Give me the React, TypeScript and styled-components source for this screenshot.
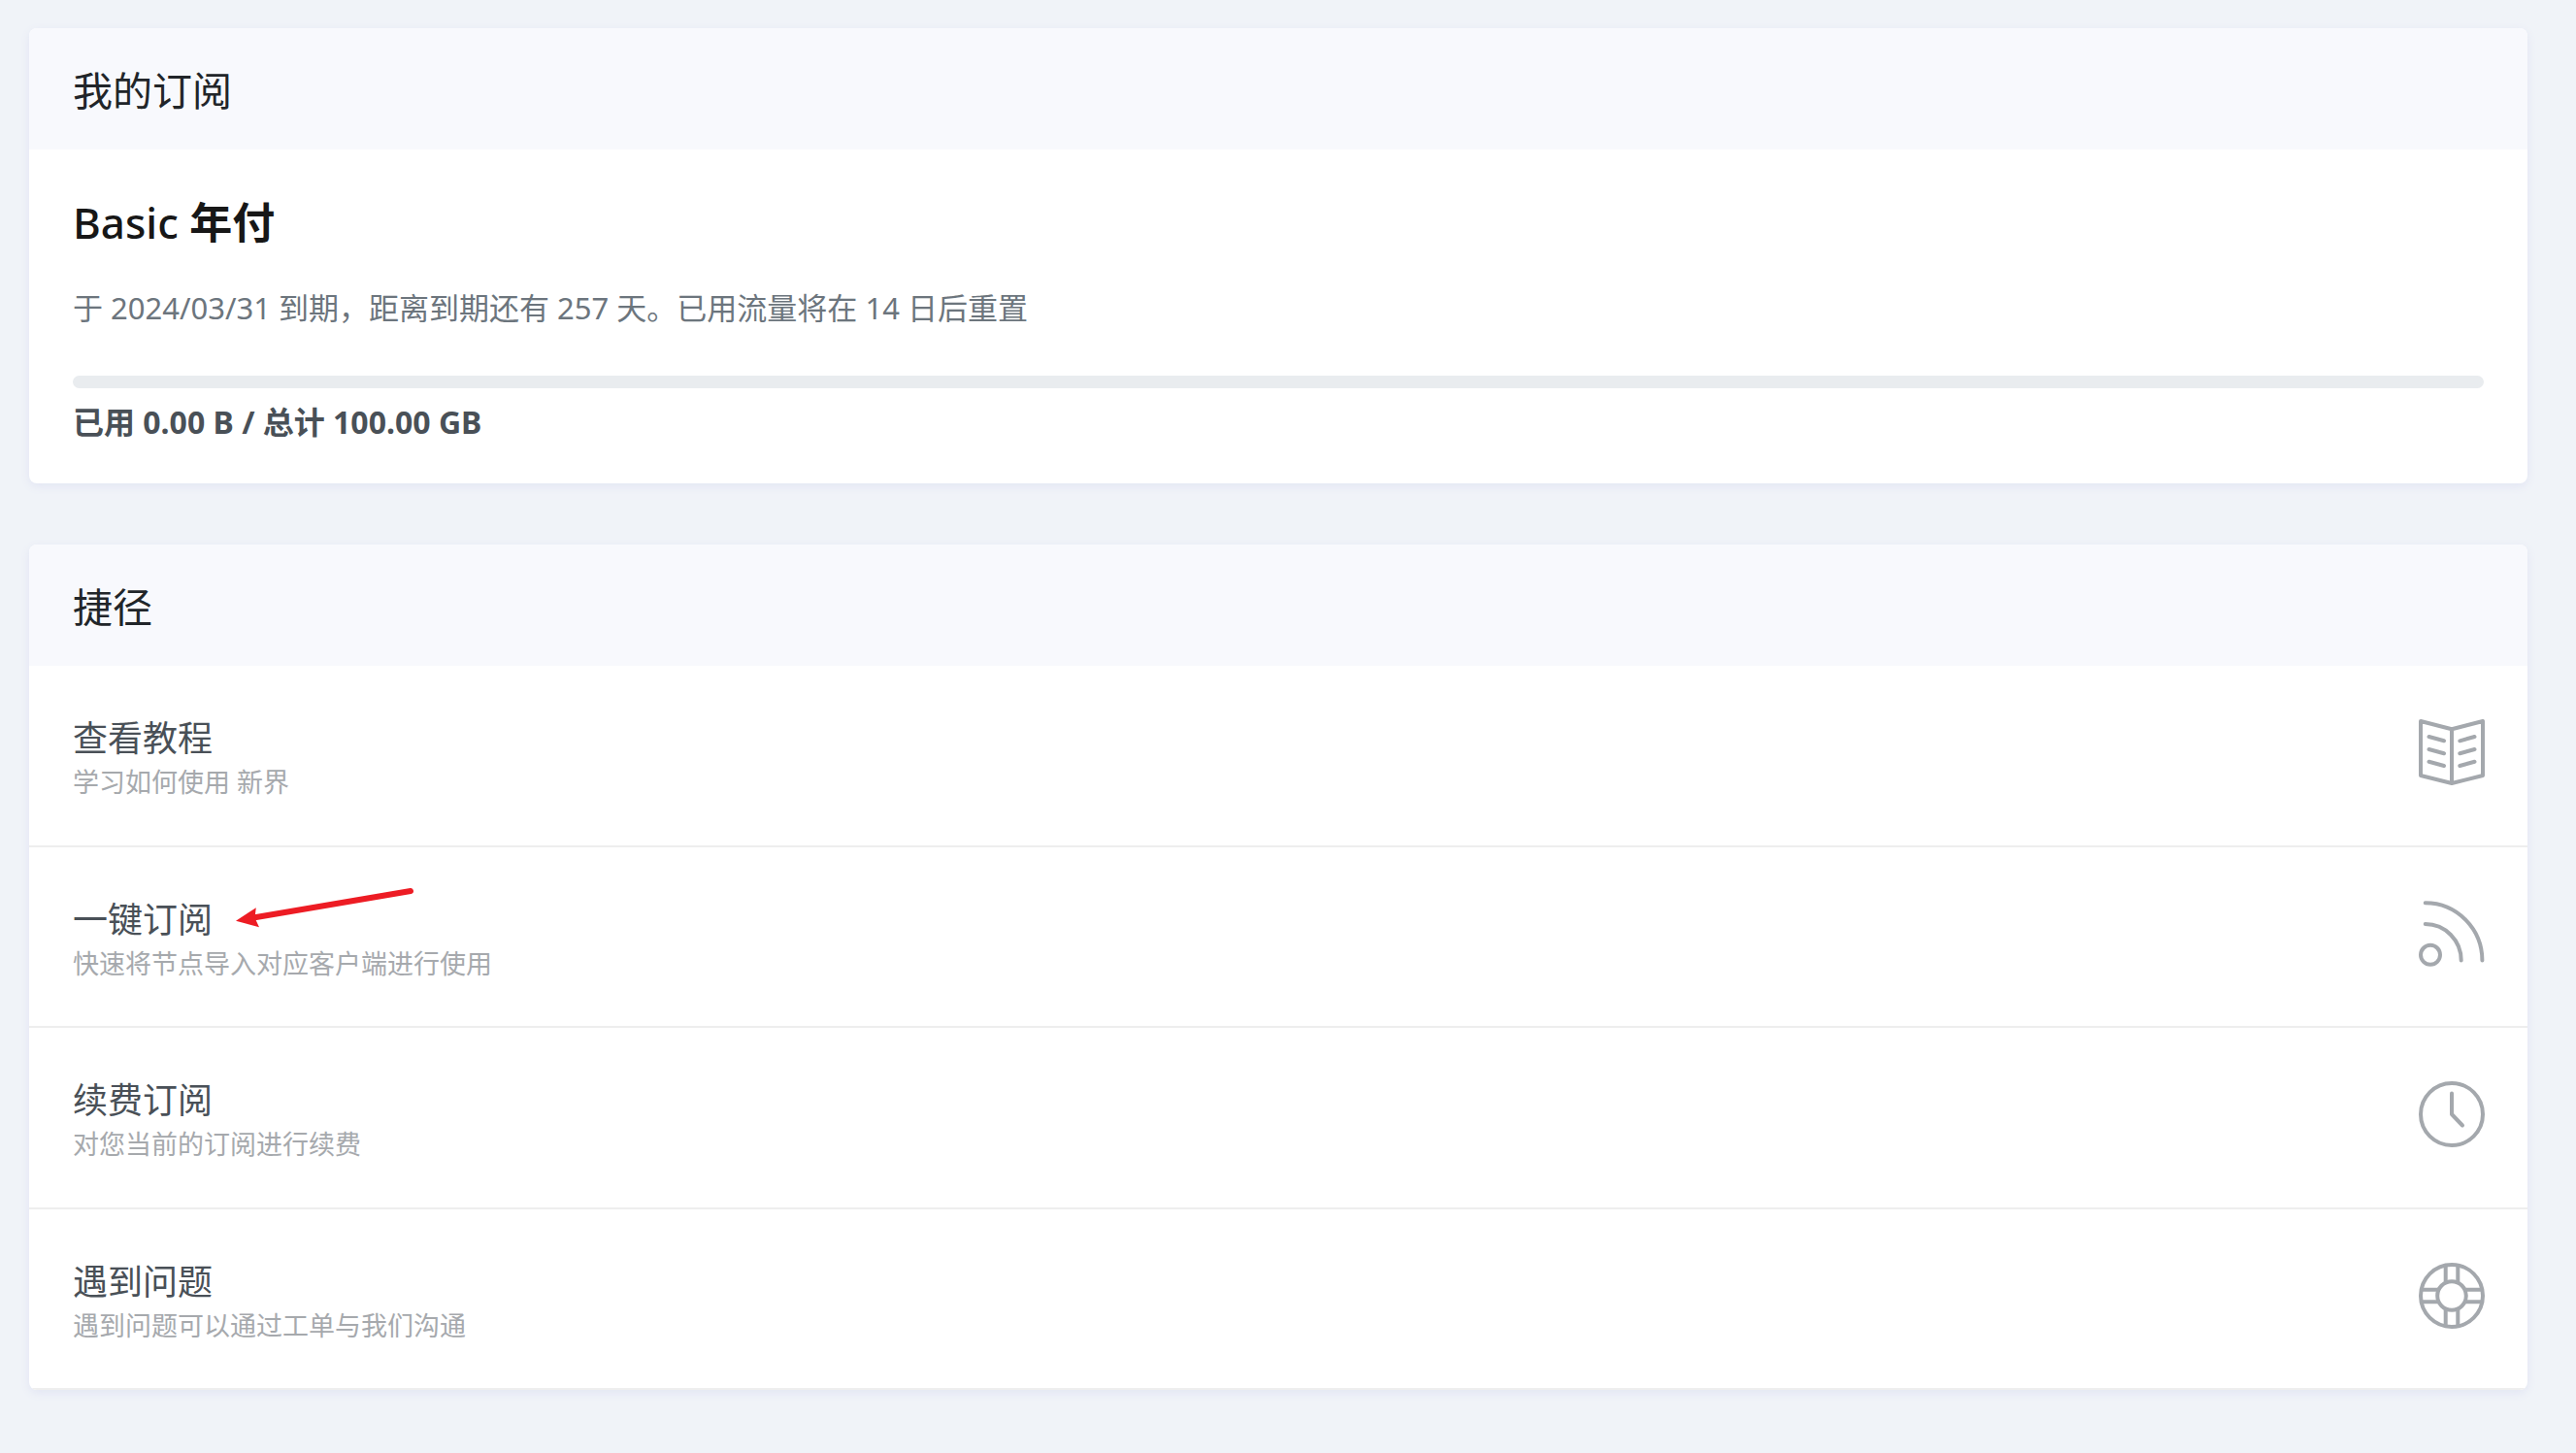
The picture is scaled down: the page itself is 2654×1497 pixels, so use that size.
import React from "react";
import styled, { createGlobalStyle } from "styled-components";

const GlobalStyle = createGlobalStyle`
  *, *::before, *::after { box-sizing: border-box; }
  body {
    margin: 0;
    background: #f0f3f8;
    color: #495057;
    font-family: "Noto Sans", "Noto Sans CJK SC", sans-serif;
    font-size: 31px;
    line-height: 46px;
  }
`;

const Page = styled.main`
  display: flex;
  flex-direction: column;
  gap: 63px;
  min-height: 100vh;
  padding: 29px 50px 64px 30px;
`;

const Card = styled.section`
  overflow: hidden;
  border-radius: 8px;
  background: #fff;
  box-shadow: 0 3px 10px #e2e5f3;
`;

const CardHeader = styled.header`
  padding: 34px 45px 31px;
  background: #f8f9fd;
`;

const CardTitle = styled.h3`
  margin: 0;
  color: #212529;
  font-size: 41px;
  font-weight: 400;
  line-height: 60px;
`;

const CardBody = styled.div`
  padding: 44px 45px 40px;
`;

const PlanName = styled.h2`
  margin: 0 0 34px;
  color: #171717;
  font-size: 44px;
  font-weight: 700;
  line-height: 62px;
`;

const PlanTier = styled.span`
  font-weight: 500;
`;

const PlanInfo = styled.p`
  margin: 0 0 47px;
  color: #6c757d;
`;

const Track = styled.div`
  height: 13px;
  margin-bottom: 12px;
  overflow: hidden;
  border-radius: 7px;
  background: #e9ecef;
`;

const Fill = styled.div`
  height: 100%;
  background: #0665d0;
`;

const Usage = styled.p`
  margin: 0;
  font-size: 32px;
  font-weight: 700;
`;

const ShortcutList = styled.nav`
  display: grid;
  grid-auto-rows: 1fr;
  min-height: 746px;
`;

const Shortcut = styled.a`
  display: flex;
  align-items: flex-start;
  justify-content: space-between;
  padding: 48px 44px 40px 45px;
  border-bottom: 2px solid #eee;
  color: inherit;
  text-decoration: none;
`;

const ShortcutText = styled.div`
  display: flex;
  flex-direction: column;
  align-items: flex-start;
`;

const ShortcutName = styled.div`
  position: relative;
  font-size: 36px;
  line-height: 54px;
`;

const ShortcutHint = styled.div`
  color: #a6a9ad;
  font-size: 27px;
  line-height: 36px;
`;

const Icon = styled.svg`
  flex: none;
  width: 68px;
  height: 68px;
  margin-top: 7px;
  fill: none;
  stroke: #a4a8ad;
  stroke-width: 4;
  stroke-linecap: round;
  stroke-linejoin: round;
`;

const Pointer = styled.svg`
  position: absolute;
  top: -8px;
  left: calc(100% + 24px);
  width: 186px;
  height: 44px;
`;

const BookIcon = () => (
  <Icon viewBox="0 0 68 68" aria-hidden="true">
    <path d="M2 2 34 10.3 66 2V58L34 66 2 58ZM34 10.3V66" />
    <path d="M10.5 18 26 22.3M10.5 31 26 35.2M10.5 43.8 26 48M42.3 22.3 57.5 18M42.3 35.2 57.5 31M42.3 48 57.5 43.8" />
  </Icon>
);

const FeedIcon = () => (
  <Icon viewBox="0 0 68 68" aria-hidden="true">
    <circle cx="12" cy="55.8" r="10" />
    <path d="M6.7 2.2A58.7 59.3 0 0 1 65.4 61.5M6.7 24A37 37.5 0 0 1 43.7 61.5" />
  </Icon>
);

const ClockIcon = () => (
  <Icon viewBox="0 0 68 68" aria-hidden="true">
    <circle cx="34" cy="34" r="32" />
    <path d="M34 12.5V34L45 45.5" />
  </Icon>
);

const SupportIcon = () => (
  <Icon viewBox="0 0 68 68" aria-hidden="true">
    <circle cx="34" cy="34" r="32" />
    <circle cx="34" cy="34" r="14.8" />
    <path d="M27.7 3V20M40.3 3V20M27.7 48V65M40.3 48V65M3 27.7H20M3 40.3H20M48 27.7H65M48 40.3H65" />
  </Icon>
);

const RedArrow = () => (
  <Pointer viewBox="0 0 186 44" aria-hidden="true">
    <path d="M180 5 18 32.5" fill="none" stroke="#ed1c24" strokeWidth="6" strokeLinecap="round" />
    <path d="M0 35.7 20.8 22.3 19.5 32.5 24 42.3Z" fill="#ed1c24" />
  </Pointer>
);

const shortcuts = [
  { name: "查看教程", hint: "学习如何使用 新界", icon: BookIcon },
  { name: "一键订阅", hint: "快速将节点导入对应客户端进行使用", icon: FeedIcon, marked: true },
  { name: "续费订阅", hint: "对您当前的订阅进行续费", icon: ClockIcon },
  { name: "遇到问题", hint: "遇到问题可以通过工单与我们沟通", icon: SupportIcon },
];

export default function App() {
  const used = 0;
  const total = 100;
  return (
    <>
      <GlobalStyle />
      <Page lang="zh-CN">
        <Card>
          <CardHeader>
            <CardTitle>我的订阅</CardTitle>
          </CardHeader>
          <CardBody>
            <PlanName>
              <PlanTier>Basic</PlanTier> 年付
            </PlanName>
            <PlanInfo>于 2024/03/31 到期，距离到期还有 257 天。已用流量将在 14 日后重置</PlanInfo>
            <Track role="progressbar" aria-valuemin={0} aria-valuemax={total} aria-valuenow={used} aria-labelledby="usage">
              <Fill style={{ width: `${(used / total) * 100}%` }} />
            </Track>
            <Usage id="usage">已用 0.00 B / 总计 100.00 GB</Usage>
          </CardBody>
        </Card>
        <Card>
          <CardHeader>
            <CardTitle>捷径</CardTitle>
          </CardHeader>
          <ShortcutList>
            {shortcuts.map(({ name, hint, icon: Glyph, marked }) => (
              <Shortcut key={name} href="#">
                <ShortcutText>
                  <ShortcutName>
                    {name}
                    {marked && <RedArrow />}
                  </ShortcutName>
                  <ShortcutHint>{hint}</ShortcutHint>
                </ShortcutText>
                <Glyph />
              </Shortcut>
            ))}
          </ShortcutList>
        </Card>
      </Page>
    </>
  );
}
